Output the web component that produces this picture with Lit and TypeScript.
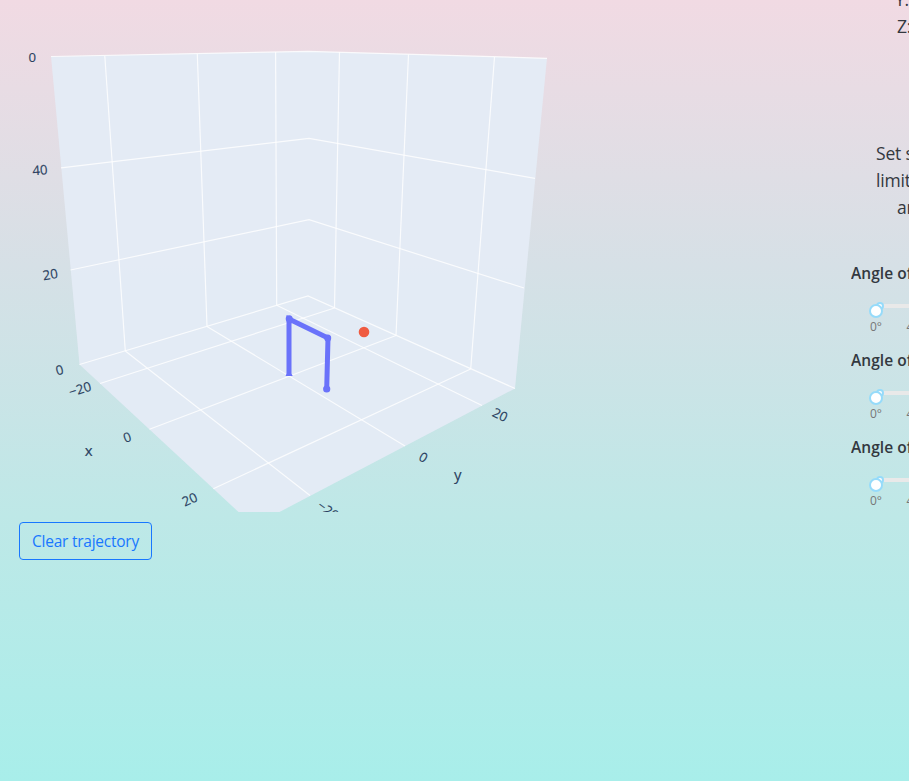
import { LitElement, html, css, svg } from "lit";
import { customElement, property } from "lit/decorators.js";

type Seg = [number, number, number, number];

const grid: Seg[] = [
  [104.8, 56, 125.3, 351], [197.3, 54, 207, 326.5], [275.6, 52, 276.7, 305.3],
  [339.5, 52, 334.5, 308], [408.5, 54.5, 396, 335.5], [494.5, 57, 470.7, 369],
  [125.3, 351, 310, 495.5], [207, 326.5, 405, 446], [276.7, 305.3, 482, 405.5],
  [334.5, 308, 100, 383.5], [396, 335.5, 149.5, 429.3], [470.7, 369, 213.3, 488.7],
];

const bends = [
  "51,56.5 308,51.3 547,58.3",
  "61,167.8 309,138.3 535,178.3",
  "70.5,270 309,219.7 524,288",
  "79.5,364.5 308,296 515,388.5",
];

const labels: { t: string; x: number; y: number; r: number }[] = [
  { t: "0", x: 32.2, y: 57, r: 0 },
  { t: "40", x: 40, y: 170.3, r: -4 },
  { t: "20", x: 50.2, y: 274.6, r: -9 },
  { t: "0", x: 59.6, y: 370.3, r: -14 },
  { t: "−20", x: 80, y: 389.3, r: -17 },
  { t: "0", x: 127.2, y: 437.6, r: -20 },
  { t: "20", x: 189.8, y: 499.6, r: -25 },
  { t: "20", x: 500, y: 415, r: 26 },
  { t: "0", x: 423.3, y: 457.5, r: 30 },
  { t: "−20", x: 328, y: 510.5, r: 36 },
];

@customElement("arm-plot")
class ArmPlot extends LitElement {
  static styles = css`
    :host { display: block; height: 512px; }
    svg { display: block; }
    .wall { fill: #e3ebf5; fill-opacity: 0.98; }
    .line { stroke: #fff; stroke-opacity: 0.8; stroke-width: 1.2; fill: none; }
    .arm { stroke: #6a72fa; stroke-width: 5; fill: none; }
    .joint { fill: #6a72fa; }
    .target { fill: #ef5b41; }
    text { font: 13.2px "Open Sans", sans-serif; fill: #2a3f5f; text-anchor: middle; stroke: #2a3f5f; stroke-width: 0.15; }
    .axis { font-size: 15px; }
  `;
  render() {
    return html`<svg width="600" height="512" viewBox="0 0 600 512">
      <polygon class="wall" points="51,56.5 308,51.3 547,58.3 515,388.5 279.5,512 238.5,512 79.5,364.5"></polygon>
      ${grid.map(([a, b, c, d]) => svg`<line class="line" x1=${a} y1=${b} x2=${c} y2=${d}></line>`)}
      ${bends.map((p) => svg`<polyline class="line" points=${p}></polyline>`)}
      <polyline class="arm" points="289,376 289,319 328,338 326.7,389"></polyline>
      <circle class="joint" cx="289.2" cy="318.7" r="3.5"></circle>
      <circle class="joint" cx="327.7" cy="338" r="3.5"></circle>
      <circle class="joint" cx="326.7" cy="389" r="3.6"></circle>
      <path class="joint" d="M285.5 376q0.5-2.5 3.5-3.5q3 1 3.8 3.5z"></path>
      <circle class="target" cx="364" cy="332" r="5.3"></circle>
      ${labels.map((l) => svg`<text transform="translate(${l.x} ${l.y}) rotate(${l.r})" dy="4.5">${l.t}</text>`)}
      <text class="axis" x="88.7" y="456.3">x</text>
      <text class="axis" x="457.7" y="480">y</text>
    </svg>`;
  }
}

@customElement("angle-slider")
class AngleSlider extends LitElement {
  static styles = css`
    :host { display: block; height: 87px; }
    .name { font-size: 15.5px; font-weight: 600; line-height: 24px; color: #33383f; white-space: nowrap; letter-spacing: 0.05px; }
    .track { height: 14px; margin: 19px 0 0 18px; display: grid; grid-template-columns: 14px 1fr; position: relative; }
    .rail { grid-column: 1 / 3; grid-row: 1; height: 4px; margin-left: 8px; background: #e9e9e9; }
    .dot, .handle { position: absolute; box-sizing: border-box; border: 2px solid #96dbfa; border-radius: 50%; background: #fff; }
    .dot { width: 8px; height: 8px; left: 7px; top: -2px; }
    .handle { width: 14px; height: 14px; left: 0; top: 0; }
    .marks { display: flex; gap: 25px; margin: 0 0 0 19px; font-size: 12px; line-height: 18px; color: #777; letter-spacing: -0.2px; }
  `;
  @property() label = "";
  render() {
    return html`<div class="name">${this.label}</div>
      <div class="track"><div class="rail"></div><span class="dot"></span><span class="handle"></span></div>
      <div class="marks"><span>0°</span><span>45°</span></div>`;
  }
}

@customElement("app-root")
class AppRoot extends LitElement {
  static styles = css`
    :host {
      display: flex; height: 781px; overflow: hidden;
      background: linear-gradient(#f1dae3, #d6e0e6 34%, #bee8e7 66%, #a8eeea);
      font-family: "Open Sans", "Noto Sans", sans-serif; color: #33383f;
    }
    .left { width: 851px; flex: none; }
    .clear {
      margin: 10px 0 0 19px; width: 133px; height: 38px; padding: 0; box-sizing: border-box;
      border: 1px solid #1877ff; border-radius: 4px; background: none; color: #1877ff;
      font: 15.5px "Open Sans", sans-serif; letter-spacing: -0.25px;
    }
    .right { width: 58px; flex: none; overflow: hidden; white-space: nowrap; }
    .text { font-size: 17.5px; line-height: 27px; letter-spacing: -0.2px; }
    .pose { margin: -14px 0 0 46px; }
    .first { margin-left: -2px; }
    .note { margin: 100px 0 0 25px; }
    .tail { padding-left: 21px; }
    .sliders { margin-top: 40px; }
  `;
  render() {
    return html`<div class="left">
        <arm-plot></arm-plot>
        <button class="clear">Clear trajectory</button>
      </div>
      <div class="right">
        <div class="text pose"><div class="first">Y:</div><div>Z:</div></div>
        <div class="text note"><div>Set s</div><div>limits</div><div class="tail">an</div></div>
        <div class="sliders">
          ${[0, 1, 2].map(() => html`<angle-slider label="Angle of"></angle-slider>`)}
        </div>
      </div>`;
  }
}
